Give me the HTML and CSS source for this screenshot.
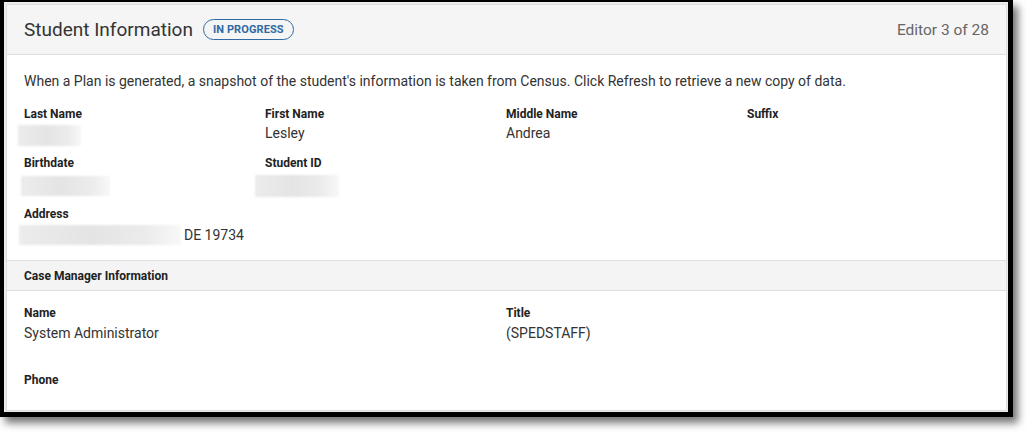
FILE: index.html
```html
<!DOCTYPE html>
<html lang="en">
<head>
<meta charset="utf-8">
<title>Student Information</title>
<link rel="stylesheet" href="styles.css">
</head>
<body>
<div class="frame">
  <div class="panel">
    <header class="panel-header">
      <div class="title-group">
        <h1 class="title">Student Information</h1>
        <span class="badge">IN PROGRESS</span>
      </div>
      <div class="editor-count">Editor 3 of 28</div>
    </header>

    <section class="section">
      <p class="intro">When a Plan is generated, a snapshot of the student's information is taken from Census. Click Refresh to retrieve a new copy of data.</p>
      <div class="grid four">
        <div class="field">
          <div class="label">Last Name</div>
          <div class="value"><span class="redact r-last"></span></div>
        </div>
        <div class="field">
          <div class="label">First Name</div>
          <div class="value">Lesley</div>
        </div>
        <div class="field">
          <div class="label">Middle Name</div>
          <div class="value">Andrea</div>
        </div>
        <div class="field">
          <div class="label">Suffix</div>
          <div class="value"></div>
        </div>

        <div class="field">
          <div class="label">Birthdate</div>
          <div class="value tall"><span class="redact r-birth"></span></div>
        </div>
        <div class="field">
          <div class="label">Student ID</div>
          <div class="value tall"><span class="redact r-id"></span></div>
        </div>
        <div class="field"></div>
        <div class="field"></div>

        <div class="field wide">
          <div class="label">Address</div>
          <div class="value addr"><span class="redact r-addr"></span><span class="addr-text">DE 19734</span></div>
        </div>
      </div>
    </section>

    <div class="band">Case Manager Information</div>

    <section class="section cm">
      <div class="grid two">
        <div class="field">
          <div class="label">Name</div>
          <div class="value">System Administrator</div>
        </div>
        <div class="field">
          <div class="label">Title</div>
          <div class="value">(SPEDSTAFF)</div>
        </div>
        <div class="field phone">
          <div class="label">Phone</div>
          <div class="value"></div>
        </div>
      </div>
    </section>
  </div>
</div>
</body>
</html>
```

FILE: styles.css
```css
* { box-sizing: border-box; }

html, body {
  margin: 0;
  padding: 0;
  background: #ffffff;
}

body {
  font-family: Roboto, "Liberation Sans", Arial, sans-serif;
  color: #333333;
  width: 1027px;
  height: 434px;
  overflow: hidden;
}

.frame {
  width: 1013px;
  height: 417px;
  border-style: solid;
  border-color: #000000;
  border-width: 2px 5px 5px 4px;
  background: #ececec;
  padding: 2px 1px 1px 2px;
  box-shadow: 5px 6px 8px rgba(0, 0, 0, 0.55);
}

.panel {
  height: 100%;
  background: #ffffff;
  border: 1px solid #dddddd;
  display: flex;
  flex-direction: column;
  overflow: hidden;
}

.panel > * { flex-shrink: 0; }

.panel-header {
  display: flex;
  align-items: center;
  justify-content: space-between;
  height: 50px;
  padding: 0 17px 0 17px;
  background: #f5f5f5;
  border-bottom: 1px solid #dedede;
}

.title-group {
  display: flex;
  align-items: center;
  gap: 10px;
}

.title {
  margin: 0;
  font-size: 19px;
  font-weight: 400;
  color: #333333;
  line-height: 24px;
}

.badge {
  display: inline-flex;
  align-items: center;
  height: 21px;
  padding: 0 9px;
  border: 1.5px solid #2f6aa3;
  border-radius: 11px;
  color: #2f6aa3;
  font-size: 11px;
  font-weight: 700;
  letter-spacing: 0.1px;
}

.editor-count {
  font-size: 15.5px;
  color: #666666;
}

.section {
  padding: 16px 17px 15px 17px;
}

.intro {
  margin: 0 0 14px 0;
  font-size: 14px;
  line-height: 20px;
  color: #333333;
}

.grid {
  display: grid;
  row-gap: 11px;
}

.grid.four { grid-template-columns: repeat(4, 241px); }
.grid.two { grid-template-columns: repeat(2, 482px); row-gap: 26px; }

.field.wide { grid-column: 1 / span 2; }

.label {
  font-size: 12px;
  font-weight: 700;
  line-height: 18px;
  color: #222222;
}

.value {
  display: flow-root;
  font-size: 14px;
  line-height: 20px;
  height: 20px;
  color: #333333;
}

.value.tall { height: 22px; }

.value.addr {
  display: flex;
  align-items: center;
  height: 22px;
  padding-top: 2px;
}

.redact {
  display: block;
  height: 21px;
  margin-top: 2px;
  background: linear-gradient(90deg, #ececec 0%, #e4e4e4 45%, #ececec 80%, #f8f8f8 100%);
  filter: blur(1.2px);
}

.r-last { width: 63px; margin-left: -6px; }
.r-birth { width: 89px; margin-left: -3px; margin-top: 4px; height: 20px; }
.r-id { width: 84px; margin-left: -10px; margin-top: 3px; height: 22px; }
.r-addr { width: 162px; margin-left: -5px; margin-top: 0; height: 20px; flex-shrink: 0; }

.addr-text { margin-left: 3px; }

.band {
  height: 31px;
  padding: 0 17px;
  display: flex;
  align-items: center;
  background: #f4f4f4;
  border-top: 1px solid #dedede;
  border-bottom: 1px solid #dedede;
  font-size: 12px;
  font-weight: 700;
  color: #222222;
}

.section.cm {
  padding-top: 13px;
  padding-bottom: 0;
}

.cm .value { line-height: 23px; height: 23px; }
```
